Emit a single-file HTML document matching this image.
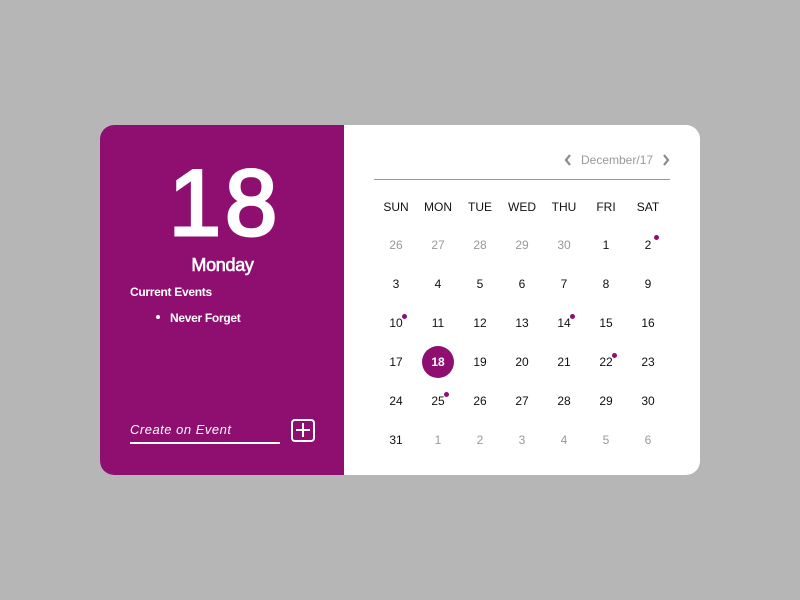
<!DOCTYPE html>
<html><head><style>
body{margin:0;width:800px;height:600px;background:#b6b6b6;font-family:"Liberation Sans",sans-serif;position:relative;overflow:hidden}
.card{position:absolute;left:100px;top:125px;width:600px;height:350px;background:#fff;border-radius:14px;overflow:hidden}
.left{position:absolute;left:0;top:0;width:244px;height:350px;background:#8f0f70;color:#fff}
.a{position:absolute}
.c{position:absolute;width:42px;text-align:center;font-size:12px;line-height:14px;color:#111}
.g{color:#999}
.h{font-size:12px;color:#111}
.dot{position:absolute;width:5px;height:5px;border-radius:50%;background:#8f0f70}
</style></head><body>
<div class="card">
<div class="left">
<div class="a" style="left:0;width:250px;top:31px;text-align:center;font-size:94px;line-height:94px;-webkit-text-stroke:3px #fff;letter-spacing:4px">18</div>
<div class="a" style="left:0;width:245px;top:129px;text-align:center;font-size:18px;line-height:22px;-webkit-text-stroke:0.6px #fff;letter-spacing:-0.3px">Monday</div>
<div class="a" style="left:30px;top:160px;font-size:12px;font-weight:bold;letter-spacing:-0.3px">Current Events</div>
<div class="a" style="left:56px;top:190px;width:4px;height:4px;border-radius:50%;background:#fff"></div>
<div class="a" style="left:70px;top:186px;font-size:12px;font-weight:bold;letter-spacing:-0.3px">Never Forget</div>
<div class="a" style="left:30px;top:297px;font-size:13px;font-style:italic;letter-spacing:0.5px">Create on Event</div>
<div class="a" style="left:30px;top:317px;width:150px;height:2px;background:#fff"></div>
<div class="a" style="left:191px;top:294px;width:20px;height:19px;border:2px solid #fff;border-radius:4px"></div>
<div class="a" style="left:196px;top:304px;width:14px;height:2px;background:#fff"></div>
<div class="a" style="left:202px;top:298px;width:2px;height:14px;background:#fff"></div>
</div>
</div>
<svg class="a" style="left:563px;top:153px" width="10" height="14"><path d="M7 2 L3 7 L7 12" stroke="#888" stroke-width="2.2" fill="none"/></svg>
<div class="a" style="left:581px;top:153px;font-size:12px;color:#999">December/17</div>
<svg class="a" style="left:661px;top:153px" width="10" height="14"><path d="M3 2 L7 7 L3 12" stroke="#888" stroke-width="2.2" fill="none"/></svg>
<div class="a" style="left:374px;top:179px;width:296px;height:1px;background:#999"></div>
<div style="position:absolute;left:0;top:0">
<div class="c h" style="left:375px;top:200px">SUN</div><div class="c h" style="left:417px;top:200px">MON</div><div class="c h" style="left:459px;top:200px">TUE</div><div class="c h" style="left:501px;top:200px">WED</div><div class="c h" style="left:543px;top:200px">THU</div><div class="c h" style="left:585px;top:200px">FRI</div><div class="c h" style="left:627px;top:200px">SAT</div>

<div class="c g" style="left:375px;top:238px">26</div><div class="c g" style="left:417px;top:238px">27</div><div class="c g" style="left:459px;top:238px">28</div><div class="c g" style="left:501px;top:238px">29</div><div class="c g" style="left:543px;top:238px">30</div><div class="c" style="left:585px;top:238px">1</div><div class="c" style="left:627px;top:238px">2</div>

<div class="c" style="left:375px;top:277px">3</div><div class="c" style="left:417px;top:277px">4</div><div class="c" style="left:459px;top:277px">5</div><div class="c" style="left:501px;top:277px">6</div><div class="c" style="left:543px;top:277px">7</div><div class="c" style="left:585px;top:277px">8</div><div class="c" style="left:627px;top:277px">9</div>

<div class="c" style="left:375px;top:316px">10</div><div class="c" style="left:417px;top:316px">11</div><div class="c" style="left:459px;top:316px">12</div><div class="c" style="left:501px;top:316px">13</div><div class="c" style="left:543px;top:316px">14</div><div class="c" style="left:585px;top:316px">15</div><div class="c" style="left:627px;top:316px">16</div>

<div class="a" style="left:422px;top:346px;width:32px;height:32px;border-radius:50%;background:#8f0f70"></div>
<div class="c" style="left:375px;top:355px">17</div><div class="c" style="left:417px;top:355px;color:#fff;font-weight:bold">18</div><div class="c" style="left:459px;top:355px">19</div><div class="c" style="left:501px;top:355px">20</div><div class="c" style="left:543px;top:355px">21</div><div class="c" style="left:585px;top:355px">22</div><div class="c" style="left:627px;top:355px">23</div>

<div class="c" style="left:375px;top:394px">24</div><div class="c" style="left:417px;top:394px">25</div><div class="c" style="left:459px;top:394px">26</div><div class="c" style="left:501px;top:394px">27</div><div class="c" style="left:543px;top:394px">28</div><div class="c" style="left:585px;top:394px">29</div><div class="c" style="left:627px;top:394px">30</div>

<div class="c" style="left:375px;top:433px">31</div><div class="c g" style="left:417px;top:433px">1</div><div class="c g" style="left:459px;top:433px">2</div><div class="c g" style="left:501px;top:433px">3</div><div class="c g" style="left:543px;top:433px">4</div><div class="c g" style="left:585px;top:433px">5</div><div class="c g" style="left:627px;top:433px">6</div>

<div class="dot" style="left:654px;top:235px"></div>
<div class="dot" style="left:402px;top:314px"></div>
<div class="dot" style="left:570px;top:314px"></div>
<div class="dot" style="left:612px;top:353px"></div>
<div class="dot" style="left:444px;top:392px"></div>
</div>
</body></html>
